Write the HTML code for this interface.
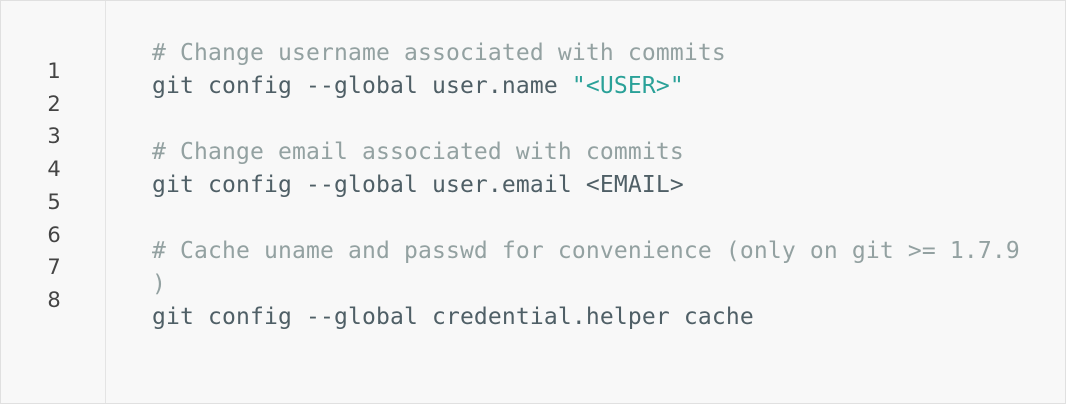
<html><head><style>
body{margin:0;background:#fff}
.box{position:absolute;left:0;top:0;width:1064px;height:402px;border:1px solid #e0e0e0;background:#f8f8f8}
.g{position:absolute;left:0;top:0;width:104px;height:402px;border-right:1px solid #e4e4e4}
.n{position:absolute;left:0;top:54px;width:106px;text-align:center;font:21px/32.7px "DejaVu Sans",sans-serif;color:#444}
pre{position:absolute;left:151px;top:36px;margin:0;font:23px/33px "DejaVu Sans Mono",monospace;letter-spacing:0.15px;color:#4f5f66}
.c{color:#93a1a1}.s{color:#2aa198}
</style></head><body><div class="box"><div class="g"></div>
<div class="n">1<br>2<br>3<br>4<br>5<br>6<br>7<br>8</div>
<pre><span class="c"># Change username associated with commits</span>
git config --global user.name <span class="s">"&lt;USER&gt;"</span>

<span class="c"># Change email associated with commits</span>
git config --global user.email &lt;EMAIL&gt;

<span class="c"># Cache uname and passwd for convenience (only on git &gt;= 1.7.9
)</span>
git config --global credential.helper cache</pre></div></body></html>
